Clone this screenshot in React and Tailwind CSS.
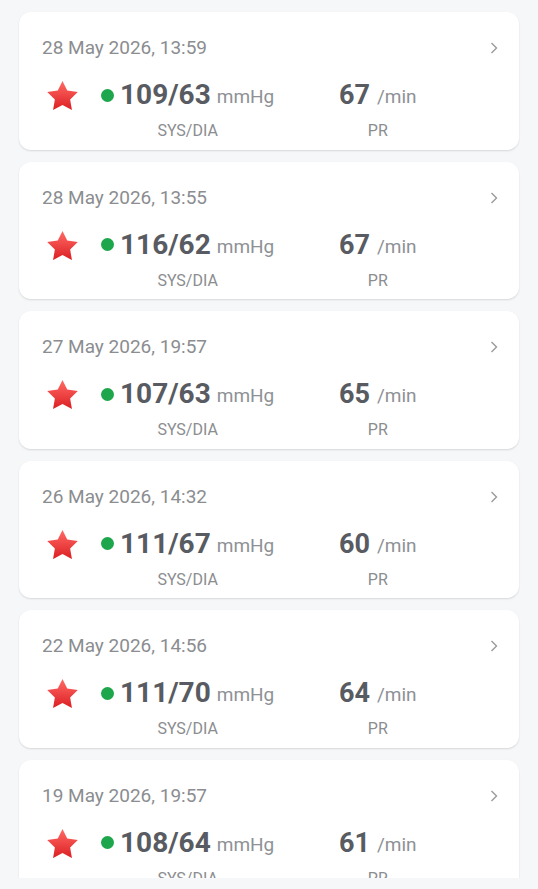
import React from "react";

const readings = [
  { date: "28 May 2026, 13:59", bp: "109/63", pr: "67" },
  { date: "28 May 2026, 13:55", bp: "116/62", pr: "67" },
  { date: "27 May 2026, 19:57", bp: "107/63", pr: "65" },
  { date: "26 May 2026, 14:32", bp: "111/67", pr: "60" },
  { date: "22 May 2026, 14:56", bp: "111/70", pr: "64" },
  { date: "19 May 2026, 19:57", bp: "108/64", pr: "61" },
];

function Star({ id }) {
  return (
    <svg viewBox="2 2 20 19.3" className="h-[29.5px] w-[31px]">
      <defs>
        <linearGradient id={id} x1="0" y1="0" x2="0" y2="1">
          <stop offset="0" stopColor="#ff6a66" />
          <stop offset="1" stopColor="#dc1f22" />
        </linearGradient>
      </defs>
      <path
        d="M12 2l3.09 6.26L22 9.27l-5 4.87 1.18 6.88L12 17.77l-6.18 3.25L7 14.14 2 9.27l6.91-1.01L12 2z"
        fill={`url(#${id})`}
      />
    </svg>
  );
}

function Chevron() {
  return (
    <svg viewBox="0 0 8 12" className="h-[12px] w-[8px]" fill="none">
      <path d="M1.5 1l5 5-5 5" stroke="#9a9a9a" strokeWidth="1.4" />
    </svg>
  );
}

function ReadingCard({ reading, index }) {
  return (
    <div className="h-[137.7px] shrink-0 rounded-[12px] bg-white pl-[23px] pr-[21px] pt-[25px] shadow-[0_1px_2px_rgba(0,0,0,0.13)]">
      <div className="flex h-[22px] items-center justify-between">
        <span className="text-[19px] leading-[22px] text-[#8b8d90]">{reading.date}</span>
        <Chevron />
      </div>
      <div className="mt-[19px] flex">
        <div className="ml-[5px] mt-[3px] shrink-0">
          <Star id={`star-${index}`} />
        </div>
        <div className="ml-[23px] w-[238px] shrink-0">
          <div className="inline-flex flex-col items-center">
            <div className="flex h-[34px] items-center">
              <span className="h-[13px] w-[13px] rounded-full bg-[#1ea64c]" />
              <span className="ml-[6px] text-[28px] font-bold leading-[34px] text-[#585b61]">
                {reading.bp}
              </span>
              <span className="ml-[6px] mt-[4px] text-[19px] leading-[34px] text-[#8e9195]">mmHg</span>
            </div>
            <span className="mt-[9px] text-[16px] leading-[20px] text-[#8b8d90]">SYS/DIA</span>
          </div>
        </div>
        <div className="inline-flex flex-col items-center">
          <div className="flex h-[34px] items-center">
            <span className="text-[27px] font-bold leading-[34px] text-[#585b61]">{reading.pr}</span>
            <span className="ml-[7px] mt-[4px] text-[19px] leading-[34px] text-[#8e9195]">/min</span>
          </div>
          <span className="mt-[9px] text-[16px] leading-[20px] text-[#8b8d90]">PR</span>
        </div>
      </div>
    </div>
  );
}

export default function App() {
  return (
    <div className="h-[889px] w-full bg-[#f6f7f9] font-['Roboto',sans-serif]">
      <div className="flex h-[878px] flex-col gap-[11.9px] overflow-hidden px-[19px] pt-[12px]">
        {readings.map((r, i) => (
          <ReadingCard key={i} reading={r} index={i} />
        ))}
      </div>
    </div>
  );
}
